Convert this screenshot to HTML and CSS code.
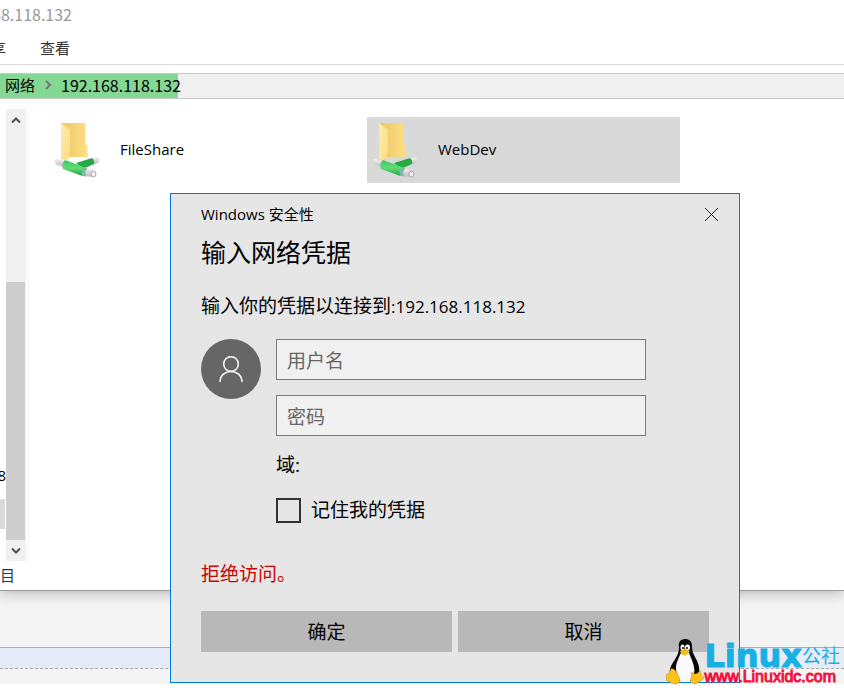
FILE: index.html
```html
<!DOCTYPE html>
<html lang="zh-CN">
<head>
<meta charset="utf-8">
<title>Windows 安全性</title>
<link rel="stylesheet" href="styles.css">
</head>
<body>
<svg class="defs" aria-hidden="true">
  <defs>
    <linearGradient id="flap" x1="0" y1="0" x2="1" y2="1"><stop offset="0" stop-color="#ffecb0"/><stop offset="1" stop-color="#fcdc80"/></linearGradient>
    <linearGradient id="back" x1="0" y1="0" x2="1" y2="0"><stop offset="0" stop-color="#ecc763"/><stop offset="1" stop-color="#fddf84"/></linearGradient>
    <linearGradient id="pipe" x1="0" y1="0" x2="0" y2="1"><stop offset="0" stop-color="#3fc65a"/><stop offset=".5" stop-color="#5fdc76"/><stop offset="1" stop-color="#1f9f3d"/></linearGradient>
    <linearGradient id="tube" x1="0" y1="0" x2="0" y2="1"><stop offset="0" stop-color="#f4f4f4"/><stop offset="1" stop-color="#bdbdbd"/></linearGradient>
    <symbol id="share" viewBox="0 0 46 58">
      <path d="M7 2h24.500v21l2 2v11H12z" fill="url(#back)"/>
      <path d="M7 2l9 7v22l-1 2v4l-3 2.500L7 38z" fill="url(#flap)"/>
      <path d="M1.500 37.500L11 40 9 46l-7-2.500q-2-3-.5-6z" fill="url(#tube)"/>
      <path d="M38 37.500l6-1.500q2 2.500 1 5.500l-5 2z" fill="url(#tube)"/>
      <path d="M22 42l16-5q3 3 2 6l-11 5z" fill="#25a945"/>
      <path d="M11 39l11 4 9 3.500q-4 3-2.500 8.500L9 48q-2-5 2-9z" fill="url(#pipe)"/>
      <path d="M31 46.500l10 3.500q2 3-1 6l-11.500-1q-2-5 2.500-8.500z" fill="url(#tube)"/>
      <path d="M30 46.500q-4 4-1.500 8.500l4 .5q-3-4 1-8z" fill="#7fb5ab"/>
      <ellipse cx="39.500" cy="53" rx="2.500" ry="3" fill="#eee" stroke="#aaa"/>
    </symbol>
  </defs>
</svg>
<main class="desktop">
  <section class="explorer">
    <header class="titlebar"><span class="clip title">68.118.132</span></header>
    <nav class="tabs"><a class="clip tab-cut" href="#">享</a><a href="#">查看</a></nav>
    <div class="address">
      <div class="progress"><a href="#" class="cjk">网络</a>
        <svg width="8" height="10" viewBox="0 0 8 10"><path d="M2 1l4 4-4 4" fill="none" stroke="#777" stroke-width="2"/></svg>
        <a href="#">192.168.118.132</a></div>
    </div>
    <div class="content">
      <aside class="tree"><span class="clip node">8</span><span class="selected"></span></aside>
      <div class="scrollbar">
        <button aria-label="向上"><svg width="10" height="8" viewBox="0 0 10 8"><path d="M1 6.500l4-4 4 4" fill="none" stroke="#505050" stroke-width="2"/></svg></button>
        <div class="track"></div><div class="thumb"></div>
        <button aria-label="向下"><svg width="10" height="8" viewBox="0 0 10 8"><path d="M1 1.500l4 4 4-4" fill="none" stroke="#505050" stroke-width="2"/></svg></button>
      </div>
      <div class="files">
        <a class="file" href="#"><svg width="46" height="58"><use href="#share"/></svg><span>FileShare</span></a>
        <a class="file active" href="#"><svg width="46" height="58"><use href="#share"/></svg><span>WebDev</span></a>
      </div>
    </div>
    <footer class="status"><span class="clip count">目</span></footer>
  </section>
  <div class="ruler"></div>
  <div class="rest"></div>
</main>

<form class="dialog" role="dialog" aria-label="Windows 安全性">
  <header class="caption"><span>Windows 安全性</span>
    <button type="button" class="close" aria-label="关闭"><svg width="13" height="13" viewBox="0 0 13 13"><path d="M0 0l13 13M13 0L0 13" stroke="#222"/></svg></button>
  </header>
  <h1>输入网络凭据</h1>
  <p class="prompt">输入你的凭据以连接到<span>:192.168.118.132</span></p>
  <div class="login">
    <svg class="avatar" width="60" height="60" viewBox="0 0 60 60"><circle cx="30" cy="30" r="30" fill="#666"/><g fill="none" stroke="#fff" stroke-width="1.500"><circle cx="30" cy="25" r="7.300"/><path d="M19 43c0-14 22-14 22 0"/></g></svg>
    <div class="fields">
      <input type="text" aria-label="用户名" placeholder="用户名">
      <input type="password" aria-label="密码" placeholder="密码">
      <p class="domain">域:</p>
      <label class="remember"><input type="checkbox">记住我的凭据</label>
    </div>
  </div>
  <p class="error">拒绝访问。</p>
  <div class="actions"><button type="submit">确定</button><button type="button">取消</button></div>
</form>

<div class="watermark">
  <svg width="38" height="46" viewBox="0 0 38 46">
    <path d="M19 0c-5 0-7 4-6 8 0 6-2 9-5 14-3 4-5 9-4 13l9 7h14l6-9c1-5-1-10-4-15-2-4-3-6-3-11 0-5-3-7-7-7z" fill="#080808"/>
    <path d="M15 14c-2 4-5 10-5 15 0 5 2 8 3 12 4 3 9 3 12 0 3-4 4-8 3-13-1-5-3-9-5-14z" fill="#fafafa"/>
    <ellipse cx="16.500" cy="8.500" rx="2" ry="3" fill="#fff"/><ellipse cx="21.500" cy="8.500" rx="2.500" ry="3" fill="#fff"/>
    <circle cx="17" cy="9" r="1"/><circle cx="21" cy="9" r="1"/>
    <path d="M14 12.500c2-3 7-3 10 0-2 2-4 4-6 4-2-1-3-2-4-4z" fill="#f5b91c"/>
    <path d="M5 30c4-1 6 4 8 8 2 4 0 7-3 7-4 0-6-2-10-4 1-3 0-5 1-6 2 0 3-3 4-5z" fill="#fcc21b" stroke="#c98200" stroke-width=".5"/>
    <path d="M26 33c1 3 6 3 8-2 0 3 1 5 4 8-2 2-6 5-9 6-4 0-5-3-4-6 1-3 0-5 1-6z" fill="#fcc21b" stroke="#c98200" stroke-width=".5"/>
  </svg>
  <div class="brand"><div class="name"><b>Linux</b><span>公社</span></div><div class="site">www.Linuxidc.com</div></div>
</div>
</body>
</html>
```

FILE: styles.css
```css
* { box-sizing: border-box; }
body { margin: 0; position: relative; min-height: 100vh; overflow: hidden; background: #fff; color: #000; font: 15px/20px "Open Sans", "Noto Sans CJK SC", sans-serif; }
a { color: inherit; text-decoration: none; }
button { border: 0; padding: 0; font: inherit; color: inherit; }
h1, p { margin: 0; font-weight: 400; }
svg { display: block; flex: none; }
.defs { position: absolute; width: 0; height: 0; }
.clip { display: flex; justify-content: flex-end; overflow: hidden; white-space: nowrap; }

.desktop { display: flex; flex-direction: column; height: calc(100vh - 4px); background: #f4f4f4; }
.explorer { flex: 1; display: flex; flex-direction: column; background: #fff; border-bottom: 1px solid #999; box-shadow: 0 1px 14px rgba(0, 0, 0, .3); z-index: 1; }
.titlebar { height: 32px; padding-top: 4px; color: #999; font: 16px/20px "Noto Sans CJK SC", sans-serif; }
.title { width: 72px; }
.tabs { display: flex; gap: 34px; height: 33px; padding-top: 6px; color: #333; border-bottom: 1px solid #dadada; }
.tab-cut { width: 6px; }
.address { height: 26px; margin-top: 8px; background: #f0f0f0; border: solid #c8c8c8; border-width: 1px 0; font: 16px/20px "Noto Sans CJK SC", sans-serif; }
.cjk { font-size: 15px; }
.progress { display: flex; align-items: center; gap: 9px; width: 178px; height: 24px; padding: 0 0 2px 5px; background: #84d893; white-space: nowrap; }
.content { flex: 1; display: flex; padding-top: 10px; }
.tree { width: 6px; display: flex; flex-direction: column; justify-content: flex-end; gap: 14px; padding-bottom: 32px; }
.node { width: 6px; }
.selected { width: 5px; height: 30px; background: #d9d9d9; }
.scrollbar { width: 20px; display: flex; flex-direction: column; background: #f0f0f0; }
.scrollbar button { height: 21px; display: grid; place-items: center; background: #f0f0f0; }
.track { flex: 152; }
.thumb { flex: 258; margin-right: 1px; background: #cdcdcd; }
.files { flex: 1; display: grid; grid-template-columns: 313px 313px; gap: 5px; align-content: start; margin-left: 2px; border-left: 1px solid #f4f4f4; padding: 8px 0 0 20px; }
.file { display: flex; align-items: center; gap: 20px; height: 66px; padding-left: 5px; }
.file span { padding-bottom: 2px; }
.file.active { background: #d9d9d9; }
.status { height: 29px; padding-top: 4px; color: #1e395b; }
.count { width: 15px; }
.ruler { margin-top: 56px; height: 22px; background: #e5ecf7; border-top: 1px solid #aaa; border-bottom: 1px dashed #aaa; }
.rest { height: 15px; }

.dialog { position: absolute; top: 193px; left: 170px; z-index: 2; width: 570px; padding: 9px 30px 30px; background: #e6e6e6; border: 1px solid #0078d7; font-size: 19px; line-height: 28px; }
.caption { display: flex; justify-content: space-between; font-size: 15px; line-height: 22px; }
.close { width: 40px; height: 22px; margin-right: -22px; display: grid; place-items: center; background: none; }
.dialog h1 { margin-top: 9px; font-size: 25px; line-height: 36px; }
.prompt { margin-top: 22px; }
.prompt span { font-size: 17px; }
.login { display: flex; gap: 15px; margin-top: 18px; }
.fields { flex: 1; display: flex; flex-direction: column; padding-right: 63px; }
.fields > input { height: 41px; margin-bottom: 15px; padding: 2px 10px 0; border: 1px solid #7a7a7a; border-radius: 0; background: #f0f0f0; font: inherit; }
.fields > input::placeholder { color: #666; opacity: 1; }
.remember { display: flex; align-items: center; gap: 10px; margin-top: 17px; }
.remember input { appearance: none; width: 25px; height: 25px; margin: 0; border: 2px solid #333; background: transparent; }
.error { margin-top: 36px; color: #c50500; }
.actions { display: grid; grid-template-columns: 1fr 1fr; gap: 6px; margin-top: 23px; }
.actions button { height: 41px; background: #b8b8b8; }

.watermark { position: absolute; right: 4px; bottom: 3px; z-index: 3; display: flex; align-items: flex-end; white-space: nowrap; }
.name { display: flex; align-items: center; color: #18afe3; }
.name b { font: bold 32px/26px "DejaVu Sans", sans-serif; -webkit-text-stroke: 1px #18afe3; }
.name span { font-size: 19px; line-height: 26px; }
.site { font: 16px/16px "Liberation Sans", sans-serif; color: #f5103c; -webkit-text-stroke: 1px #f5103c; }
```
